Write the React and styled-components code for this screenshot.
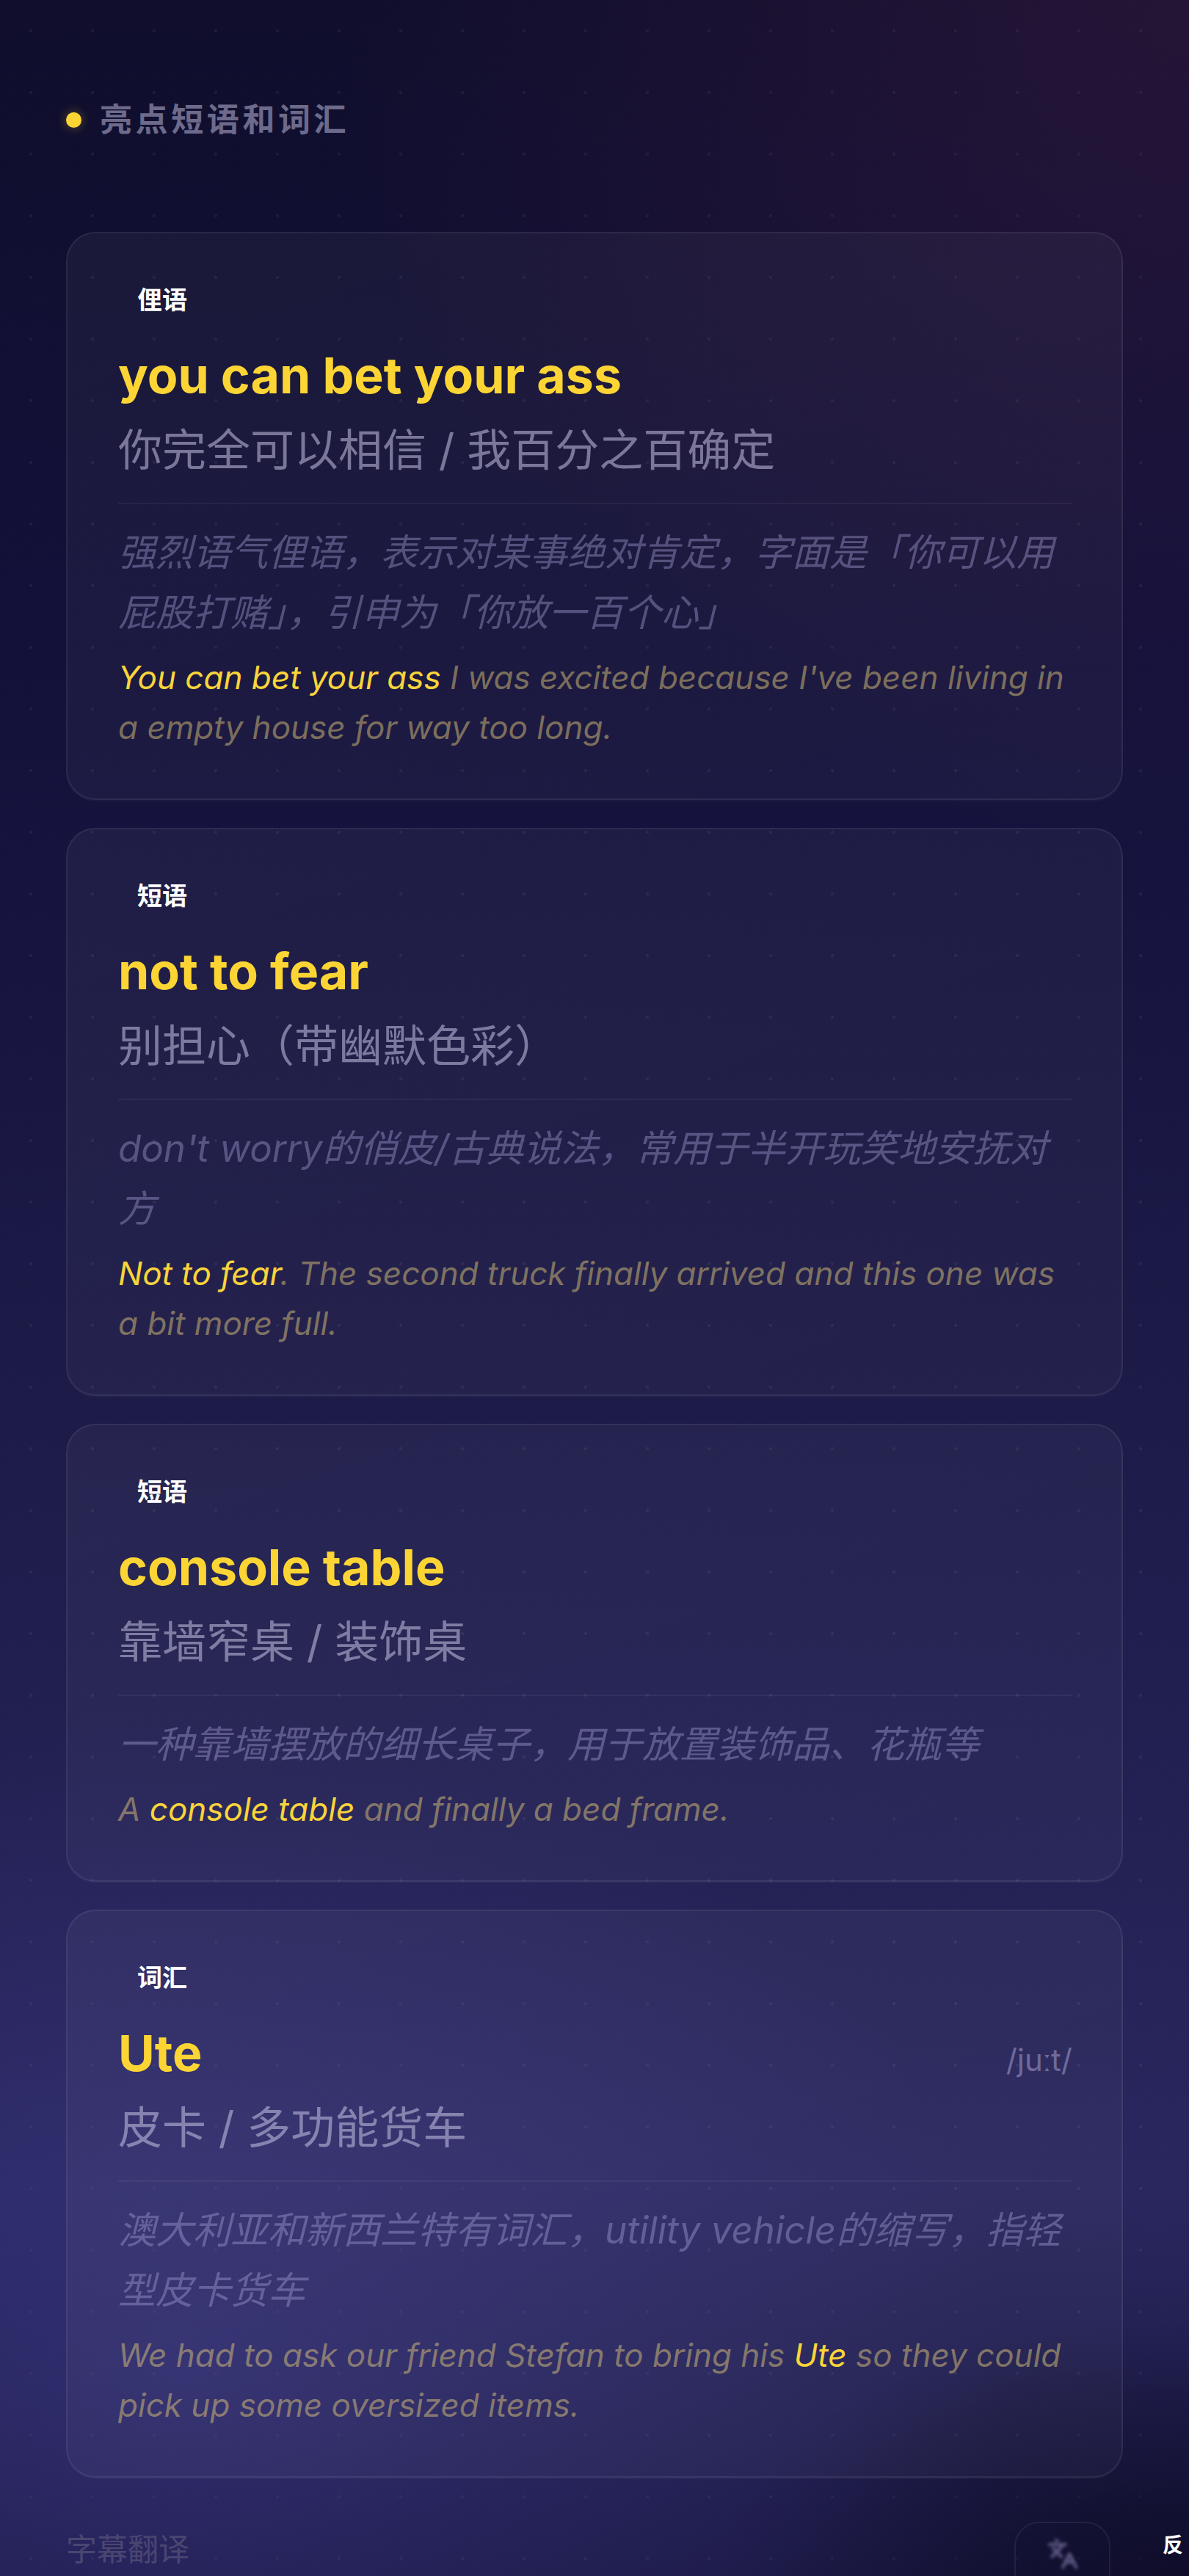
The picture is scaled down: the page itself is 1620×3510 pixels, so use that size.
import styled, { createGlobalStyle } from "styled-components";
import { Languages } from "lucide-react";

const GlobalStyle = createGlobalStyle`
  html, body {
    margin: 0;
    padding: 0;
    background: #100e2c;
  }
  * { box-sizing: border-box; }
  body {
    font-family: Inter, "Noto Sans CJK SC", sans-serif;
  }
`;

const items = [
  {
    tag: "俚语",
    term: "you can bet your ass",
    meaning: "你完全可以相信 / 我百分之百确定",
    desc: "强烈语气俚语，表示对某事绝对肯定，字面是「你可以用屁股打赌」，引申为「你放一百个心」",
    example: [["You can bet your ass", true], [" I was excited because I've been living in a empty house for way too long.", false]],
  },
  {
    tag: "短语",
    term: "not to fear",
    meaning: "别担心（带幽默色彩）",
    desc: "don't worry的俏皮/古典说法，常用于半开玩笑地安抚对方",
    example: [["Not to fear", true], [". The second truck finally arrived and this one was a bit more full.", false]],
  },
  {
    tag: "短语",
    term: "console table",
    meaning: "靠墙窄桌 / 装饰桌",
    desc: "一种靠墙摆放的细长桌子，用于放置装饰品、花瓶等",
    example: [["A ", false], ["console table", true], [" and finally a bed frame.", false]],
  },
  {
    tag: "词汇",
    term: "Ute",
    phonetic: "/juːt/",
    meaning: "皮卡 / 多功能货车",
    desc: "澳大利亚和新西兰特有词汇，utility vehicle的缩写，指轻型皮卡货车",
    example: [["We had to ask our friend Stefan to bring his ", false], ["Ute", true], [" so they could pick up some oversized items.", false]],
  },
];

export default function App() {
  return (
    <Page>
      <GlobalStyle />
      <Header>
        <Dot />
        <HeaderTitle>亮点短语和词汇</HeaderTitle>
      </Header>

      <CardList>
        {items.map((item, i) => (
          <Card key={i}>
            <Tag>{item.tag}</Tag>
            <TitleRow>
              <Term>{item.term}</Term>
              {item.phonetic && <Phonetic>{item.phonetic}</Phonetic>}
            </TitleRow>
            <Meaning>{item.meaning}</Meaning>
            <Divider />
            <Desc>{item.desc}</Desc>
            <Example>
              {item.example.map(([text, hl], j) =>
                hl ? <Highlight key={j}>{text}</Highlight> : <span key={j}>{text}</span>
              )}
            </Example>
          </Card>
        ))}
      </CardList>

      <Footer>
        <FooterLabel>字幕翻译</FooterLabel>
        <GhostButton>
          <Languages size={44} strokeWidth={2.4} />
        </GhostButton>
      </Footer>

      <EdgeGlyph>反</EdgeGlyph>
    </Page>
  );
}

const Page = styled.div`
  position: relative;
  width: 1620px;
  height: 3510px;
  overflow: hidden;
  padding: 133px 90px 0;
  background:
    radial-gradient(circle at 100% 0%, rgba(110, 45, 90, 0.22), transparent 30%),
    radial-gradient(ellipse 70% 25% at 15% 92%, rgba(62, 58, 140, 0.5), transparent 100%),
    radial-gradient(ellipse 40% 10% at 100% 100%, rgba(10, 8, 30, 0.7), transparent 100%),
    radial-gradient(circle, rgba(255, 255, 255, 0.055) 1.6px, transparent 2.6px) 0 0 / 84px 84px,
    linear-gradient(180deg, #100e2c 0%, #13113a 25%, #1d1b48 55%, #29275e 85%, #1a1842 100%);
`;

const Header = styled.div`
  display: flex;
  align-items: center;
  gap: 25px;
  height: 60px;
`;

const Dot = styled.span`
  width: 21px;
  height: 21px;
  border-radius: 50%;
  background: #fcd535;
  box-shadow: 0 0 14px rgba(252, 213, 53, 0.35);
`;

const HeaderTitle = styled.h2`
  margin: 0;
  font-size: 44px;
  line-height: 60px;
  font-weight: 700;
  letter-spacing: 4.6px;
  color: #6d6a8b;
`;

const CardList = styled.div`
  display: flex;
  flex-direction: column;
  gap: 38px;
  margin-top: 123px;
`;

const Card = styled.div`
  padding: 63px 67px 63px 69px;
  border: 2px solid rgba(255, 255, 255, 0.07);
  border-radius: 40px;
  background: linear-gradient(160deg, rgba(255, 255, 255, 0.045), rgba(255, 255, 255, 0.03));
  box-shadow: 0 2px 0 rgba(255, 255, 255, 0.03);
`;

const Tag = styled.span`
  display: inline-block;
  padding: 6px 26px;
  font-size: 34px;
  line-height: 44px;
  font-weight: 700;
  color: #ffffff;
`;

const TitleRow = styled.div`
  display: flex;
  justify-content: space-between;
  align-items: baseline;
  margin-top: 34px;
`;

const Term = styled.div`
  font-size: 68px;
  line-height: 80px;
  font-weight: 700;
  color: #fcd535;
`;

const Phonetic = styled.div`
  font-size: 42px;
  line-height: 1;
  color: #6f6a9c;
`;

const Meaning = styled.div`
  margin-top: 20px;
  font-size: 60px;
  line-height: 84px;
  color: rgba(200, 196, 230, 0.55);
`;

const Divider = styled.div`
  height: 2px;
  margin-top: 30px;
  background: rgba(255, 255, 255, 0.05);
`;

const Desc = styled.p`
  margin: 25px 0 0;
  font-size: 51px;
  line-height: 82px;
  font-style: italic;
  color: rgba(170, 165, 220, 0.4);
`;

const Example = styled.p`
  margin: 13px 0 0;
  font-size: 44px;
  line-height: 68px;
  font-style: italic;
  color: rgba(220, 195, 120, 0.5);
`;

const Highlight = styled.span`
  color: #f9d43a;
`;

const Footer = styled.div`
  display: flex;
  justify-content: space-between;
  align-items: flex-start;
  margin-top: 60px;
`;

const FooterLabel = styled.div`
  font-size: 42px;
  line-height: 76px;
  color: #4a4671;
`;

const GhostButton = styled.div`
  display: flex;
  align-items: flex-start;
  justify-content: center;
  width: 131px;
  height: 110px;
  margin-right: 17px;
  padding-top: 20px;
  border: 2px solid rgba(255, 255, 255, 0.07);
  border-radius: 34px;
  color: #5a5680;
  svg { filter: blur(2px); }
`;

const EdgeGlyph = styled.div`
  position: absolute;
  left: 1584px;
  top: 3448px;
  font-size: 28px;
  line-height: 40px;
  font-weight: 700;
  color: #ffffff;
`;
